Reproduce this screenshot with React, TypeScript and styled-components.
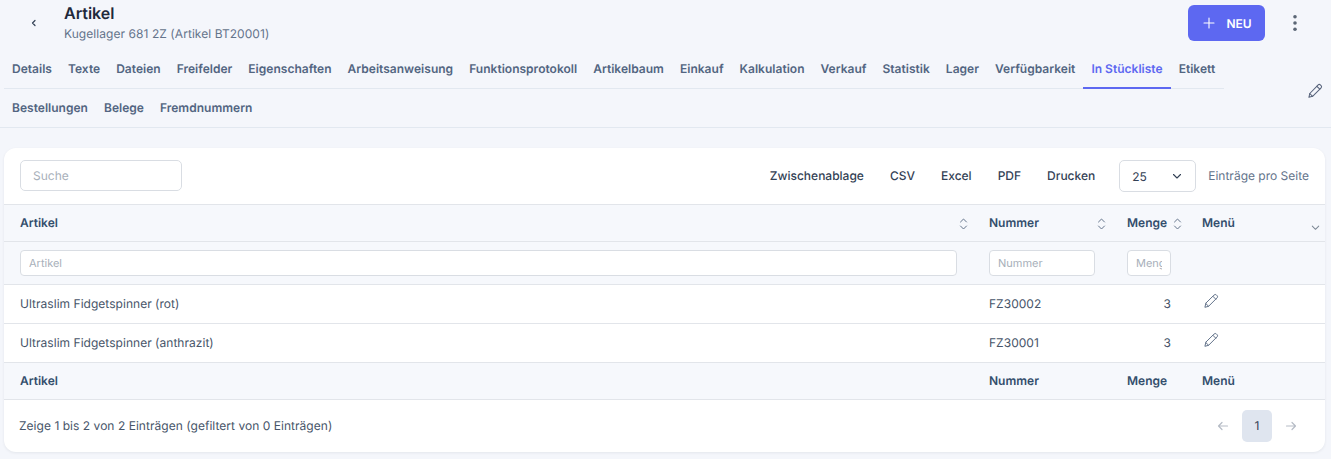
import React from "react";
import styled, { createGlobalStyle } from "styled-components";

const Global = createGlobalStyle`
  html, body { margin: 0; padding: 0; background: #f4f6fb; }
  body { font-family: Inter, "Liberation Sans", sans-serif; color: #334155; -webkit-font-smoothing: antialiased; text-rendering: geometricPrecision; }
  * { box-sizing: border-box; }
`;

const Page = styled.div`
  width: 1331px;
  height: 459px;
  overflow: hidden;
  background: #f4f6fb;
`;

const Top = styled.header`
  height: 50px;
  display: flex;
  align-items: flex-start;
  padding: 5px 12px 0 4px;
`;

const BackButton = styled.div`
  width: 60px;
  height: 36px;
  display: flex;
  align-items: center;
  justify-content: center;
  color: #334155;
`;

const TitleBlock = styled.div`
  flex: 1;
  display: flex;
  flex-direction: column;
`;

const Title = styled.h1`
  margin: 0;
  font-size: 16px;
  line-height: 16px;
  font-weight: 600;
  color: #1e293b;
`;

const Subtitle = styled.div`
  margin-top: 5px;
  font-size: 12px;
  line-height: 16px;
  letter-spacing: 0.06px;
  color: #64748b;
`;

const NewButton = styled.button`
  width: 77px;
  height: 36px;
  border: 0;
  border-radius: 6px;
  background: #5d68f1;
  color: #fff;
  font: 600 12px Inter, sans-serif;
  text-rendering: geometricPrecision;
  display: flex;
  align-items: center;
  justify-content: center;
  gap: 11px;
  padding: 0 0 0 2px;
`;

const Kebab = styled.div`
  width: 48px;
  height: 36px;
  margin-left: 6px;
  display: flex;
  align-items: center;
  justify-content: center;
`;

const TabArea = styled.div`
  position: relative;
  height: 78px;
  border-bottom: 1px solid #e2e8f0;
`;

const TabRow = styled.nav<{ $wide?: boolean }>`
  height: 39px;
  margin-left: 4px;
  width: ${(p) => (p.$wide ? "auto" : "1220px")};
  display: flex;
  border-bottom: ${(p) => (p.$wide ? "0" : "1px solid #e2e8f0")};
`;

const Tab = styled.a<{ $active?: boolean }>`
  height: 39px;
  padding: 0 8px;
  display: flex;
  align-items: center;
  font-size: 12px;
  font-weight: 600;
  letter-spacing: 0.02px;
  white-space: nowrap;
  color: ${(p) => (p.$active ? "#5d68f1" : "#526581")};
  border-bottom: 2px solid ${(p) => (p.$active ? "#5d68f1" : "transparent")};
`;

const EditTabs = styled.div`
  position: absolute;
  left: 1307px;
  top: 33px;
  color: #56627a;
  line-height: 0;
`;

const Card = styled.section`
  margin: 20px 6px 0 4px;
  height: 304px;
  background: #fff;
  border-radius: 12px;
  box-shadow: 0 1px 3px rgba(15, 23, 42, 0.07);
  overflow: hidden;
`;

const Toolbar = styled.div`
  height: 56px;
  padding: 12px 16px 0;
  display: flex;
  align-items: flex-start;
`;

const SearchInput = styled.input`
  width: 162px;
  height: 31px;
  border: 1px solid #d9dde3;
  border-radius: 5px;
  padding: 0 12px;
  font: 12px Inter, sans-serif;
  text-rendering: geometricPrecision;
  background: #fff;
  &::placeholder { color: #a8b0ba; opacity: 1; }
`;

const Actions = styled.div`
  margin-left: auto;
  height: 31px;
  display: flex;
  align-items: center;
  gap: 26px;
  font-size: 12px;
  font-weight: 500;
  color: #334155;
`;

const PageSize = styled.div`
  margin-left: 24px;
  width: 77px;
  height: 32px;
  border: 1px solid #d9dde3;
  border-radius: 5px;
  display: flex;
  align-items: center;
  justify-content: space-between;
  padding: 0 12px;
  font-size: 12px;
  color: #334155;
`;

const PageSizeLabel = styled.span`
  margin-left: 12px;
  line-height: 31px;
  font-size: 12px;
  color: #64748b;
`;

const Table = styled.table`
  width: 100%;
  table-layout: fixed;
  border-collapse: collapse;
  font-size: 12px;
`;

const HeadRow = styled.tr<{ $h: number }>`
  height: ${(p) => p.$h}px;
  background: #f6f8fc;
  border-top: 1px solid #e2e5ea;
`;

const BodyRow = styled.tr`
  height: 39px;
  border-top: 1px solid #e2e5ea;
`;

const Th = styled.th<{ $menu?: boolean; $flush?: boolean }>`
  position: relative;
  padding: 0 16px ${(p) => (p.$flush ? "0" : "2px")};
  padding-left: ${(p) => (p.$menu ? "15px" : "16px")};
  text-align: left;
  font-size: 12px;
  font-weight: 600;
  color: #334e6c;
`;

const SortIcon = styled.span`
  position: absolute;
  right: 4px;
  top: 12px;
  line-height: 0;
  color: #64748b;
`;

const MenuCaret = styled.span`
  position: absolute;
  right: 4px;
  top: 17px;
  line-height: 0;
  color: #7c8794;
`;

const FilterCell = styled.td`
  padding: 0 16px;
`;

const FilterInput = styled.input`
  display: block;
  width: 100%;
  height: 26px;
  border: 1px solid #d9dde3;
  border-radius: 4px;
  padding: 0 8px;
  font: 11px Inter, sans-serif;
  text-rendering: geometricPrecision;
  background: #fff;
  &::placeholder { color: #a8b0ba; opacity: 1; }
`;

const Td = styled.td<{ $right?: boolean; $menu?: boolean }>`
  padding: 0 16px;
  padding-left: ${(p) => (p.$menu ? "15px" : "16px")};
  text-align: ${(p) => (p.$right ? "right" : "left")};
  color: #475569;
  line-height: 0;
  font-size: 12px;
`;

const CellText = styled.span`
  line-height: 16px;
  letter-spacing: 0.03px;
`;

const RowEdit = styled.span`
  display: inline-block;
  margin: -6px 0 0 0.5px;
  vertical-align: top;
  color: #64748b;
`;

const TableFoot = styled.div`
  height: 53px;
  padding: 0 28px 0 15px;
  border-top: 1px solid #e2e5ea;
  display: flex;
  align-items: center;
  justify-content: space-between;
  font-size: 12px;
  letter-spacing: 0.035px;
  color: #475569;
`;

const Pager = styled.div`
  display: flex;
  align-items: center;
  gap: 13px;
  color: #b6bcc6;
`;

const PageBtn = styled.div`
  width: 30px;
  height: 32px;
  border-radius: 5px;
  background: #dfe5ef;
  color: #334155;
  display: flex;
  align-items: center;
  justify-content: center;
  font-size: 12px;
  font-weight: 400;
`;

const PencilIcon = ({ size = 16, weight = 1 }: { size?: number; weight?: number }) => (
  <svg width={size} height={size} viewBox="0 0 16 16" fill="none" stroke="currentColor" strokeWidth={weight} strokeLinejoin="round" strokeLinecap="round">
    <path d="M11.2 1.9a1.5 1.5 0 0 1 2.1 0l.8.8a1.5 1.5 0 0 1 0 2.1L5.6 13.3l-3.7 1 .9-3.8z" />
    <path d="M9.9 3.3l2.9 2.9M2.8 10.5l2.8 2.8" />
  </svg>
);

const Sort = () => (
  <svg width="11" height="14" viewBox="0 0 11 14" fill="none" stroke="currentColor" strokeWidth="1" strokeLinecap="round" strokeLinejoin="round">
    <path d="M2.5 5 5.5 2l3 3M2.5 9l3 3 3-3" />
  </svg>
);

const Chevron = ({ size = 12 }: { size?: number }) => (
  <svg width={size} height={size} viewBox="0 0 12 12" fill="none" stroke="currentColor" strokeWidth="1.1" strokeLinecap="round" strokeLinejoin="round">
    <path d="M2.5 4.5 6 8l3.5-3.5" />
  </svg>
);

const Arrow = ({ left }: { left?: boolean }) => (
  <svg width="12" height="12" viewBox="0 0 12 12" fill="none" stroke="currentColor" strokeWidth="1.2" strokeLinecap="round" strokeLinejoin="round">
    {left ? <path d="M10.5 6h-9M5 2.5 1.5 6 5 9.5" /> : <path d="M1.5 6h9M7 2.5 10.5 6 7 9.5" />}
  </svg>
);

const row1 = ["Details", "Texte", "Dateien", "Freifelder", "Eigenschaften", "Arbeitsanweisung", "Funktionsprotokoll", "Artikelbaum", "Einkauf", "Kalkulation", "Verkauf", "Statistik", "Lager", "Verfügbarkeit", "In Stückliste", "Etikett"];
const row2 = ["Bestellungen", "Belege", "Fremdnummern"];

const rows = [
  { name: "Ultraslim Fidgetspinner (rot)", nr: "FZ30002", qty: 3 },
  { name: "Ultraslim Fidgetspinner (anthrazit)", nr: "FZ30001", qty: 3 },
];

export default function App() {
  return (
    <Page>
      <Global />
      <Top>
        <BackButton>
          <svg width="12" height="12" viewBox="0 0 12 12" fill="none" stroke="currentColor" strokeWidth="1.2" strokeLinecap="round" strokeLinejoin="round">
            <path d="M7 3.5 4.5 6 7 8.5" />
          </svg>
        </BackButton>
        <TitleBlock>
          <Title>Artikel</Title>
          <Subtitle>Kugellager 681 2Z (Artikel BT20001)</Subtitle>
        </TitleBlock>
        <NewButton>
          <svg width="12" height="12" viewBox="0 0 12 12" fill="none" stroke="currentColor" strokeWidth="1.1" strokeLinecap="round">
            <path d="M6 1v10M1 6h10" />
          </svg>
          NEU
        </NewButton>
        <Kebab>
          <svg width="6" height="18" viewBox="0 0 6 18" fill="#5b6675">
            <circle cx="3" cy="2.8" r="1.8" />
            <circle cx="3" cy="9" r="1.8" />
            <circle cx="3" cy="15.2" r="1.8" />
          </svg>
        </Kebab>
      </Top>
      <TabArea>
        <TabRow>
          {row1.map((t) => (
            <Tab key={t} $active={t === "In Stückliste"}>{t}</Tab>
          ))}
        </TabRow>
        <TabRow $wide>
          {row2.map((t) => (
            <Tab key={t}>{t}</Tab>
          ))}
        </TabRow>
        <EditTabs><PencilIcon weight={1.05} /></EditTabs>
      </TabArea>
      <Card>
        <Toolbar>
          <SearchInput placeholder="Suche" />
          <Actions>
            <span>Zwischenablage</span>
            <span>CSV</span>
            <span>Excel</span>
            <span>PDF</span>
            <span>Drucken</span>
          </Actions>
          <PageSize>
            25
            <Chevron />
          </PageSize>
          <PageSizeLabel>Einträge pro Seite</PageSizeLabel>
        </Toolbar>
        <Table>
          <colgroup>
            <col style={{ width: 969 }} />
            <col style={{ width: 138 }} />
            <col style={{ width: 76 }} />
            <col style={{ width: 138 }} />
          </colgroup>
          <thead>
            <HeadRow $h={37}>
              <Th>Artikel<SortIcon><Sort /></SortIcon></Th>
              <Th>Nummer<SortIcon><Sort /></SortIcon></Th>
              <Th>Menge<SortIcon><Sort /></SortIcon></Th>
              <Th $menu>Menü<MenuCaret><Chevron size={11} /></MenuCaret></Th>
            </HeadRow>
            <HeadRow $h={43}>
              <FilterCell><FilterInput placeholder="Artikel" /></FilterCell>
              <FilterCell><FilterInput placeholder="Nummer" /></FilterCell>
              <FilterCell><FilterInput placeholder="Menge" /></FilterCell>
              <FilterCell />
            </HeadRow>
          </thead>
          <tbody>
            {rows.map((r) => (
              <BodyRow key={r.nr}>
                <Td><CellText>{r.name}</CellText></Td>
                <Td><CellText>{r.nr}</CellText></Td>
                <Td $right><CellText>{r.qty}</CellText></Td>
                <Td $menu><RowEdit><PencilIcon /></RowEdit></Td>
              </BodyRow>
            ))}
          </tbody>
          <tfoot>
            <HeadRow $h={36}>
              <Th $flush>Artikel</Th>
              <Th $flush>Nummer</Th>
              <Th $flush>Menge</Th>
              <Th $flush $menu>Menü</Th>
            </HeadRow>
          </tfoot>
        </Table>
        <TableFoot>
          <span>Zeige 1 bis 2 von 2 Einträgen (gefiltert von 0 Einträgen)</span>
          <Pager>
            <Arrow left />
            <PageBtn>1</PageBtn>
            <Arrow />
          </Pager>
        </TableFoot>
      </Card>
    </Page>
  );
}
